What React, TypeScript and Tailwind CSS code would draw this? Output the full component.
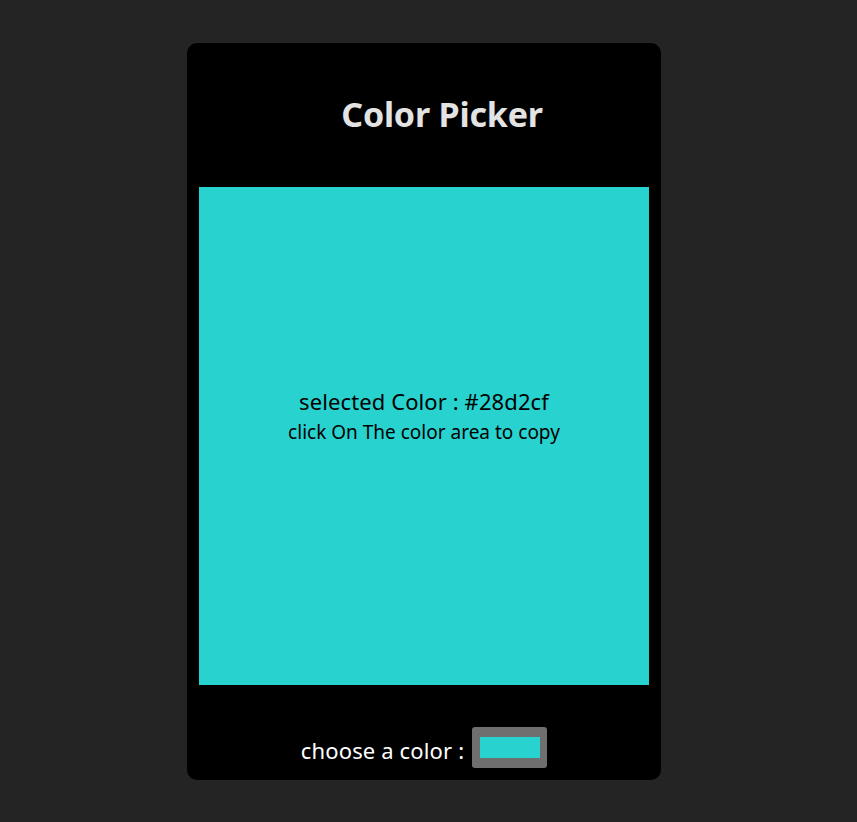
import React, { useState } from 'react';

const App = () => {
    const [color, setColor] = useState('#28d2cf');

    const handleCopy = () => {
        navigator.clipboard?.writeText(color).catch(() => {});
    };

    return (
        <div className="min-h-screen bg-[#242424] flex justify-center pt-[43px] pr-[9px]" style={{ fontFamily: '"Noto Sans", "Open Sans", sans-serif' }}>
            <div className="w-[474px] h-[737px] bg-black rounded-[10px] p-3 flex flex-col">
                {/* Title */}
                <div className="h-[132px] flex items-center justify-center pl-9 pb-[14px]">
                    <h1 className="text-[34px] font-bold text-[#e3e3e3] tracking-[-0.2px]">Color Picker</h1>
                </div>

                {/* Color area */}
                <div
                    onClick={handleCopy}
                    className="h-[498px] w-full flex flex-col items-center justify-center pb-[42px] cursor-pointer text-black"
                    style={{ backgroundColor: color }}
                >
                    <p className="text-[22px] leading-[32px] tracking-[0.1px]">selected Color : {color}</p>
                    <p className="text-[19px] leading-[28px] mt-[1px]">click On The color area to copy</p>
                </div>

                {/* Picker */}
                <div className="flex-1 flex items-end justify-center gap-[8px]">
                    <label className="text-white text-[22px] leading-[30px] mb-[3px] tracking-[0.15px]">choose a color :</label>
                    <div className="w-[75px] h-[41px] bg-[#6f6f6f] rounded-[3px] flex items-center justify-center relative">
                        <div className="w-[60px] h-[21px]" style={{ backgroundColor: color }} />
                        <input
                            type="color"
                            value={color}
                            onChange={(e) => setColor(e.target.value)}
                            className="absolute inset-0 opacity-0 cursor-pointer w-full h-full"
                        />
                    </div>
                </div>
            </div>
        </div>
    );
};

export default App;
